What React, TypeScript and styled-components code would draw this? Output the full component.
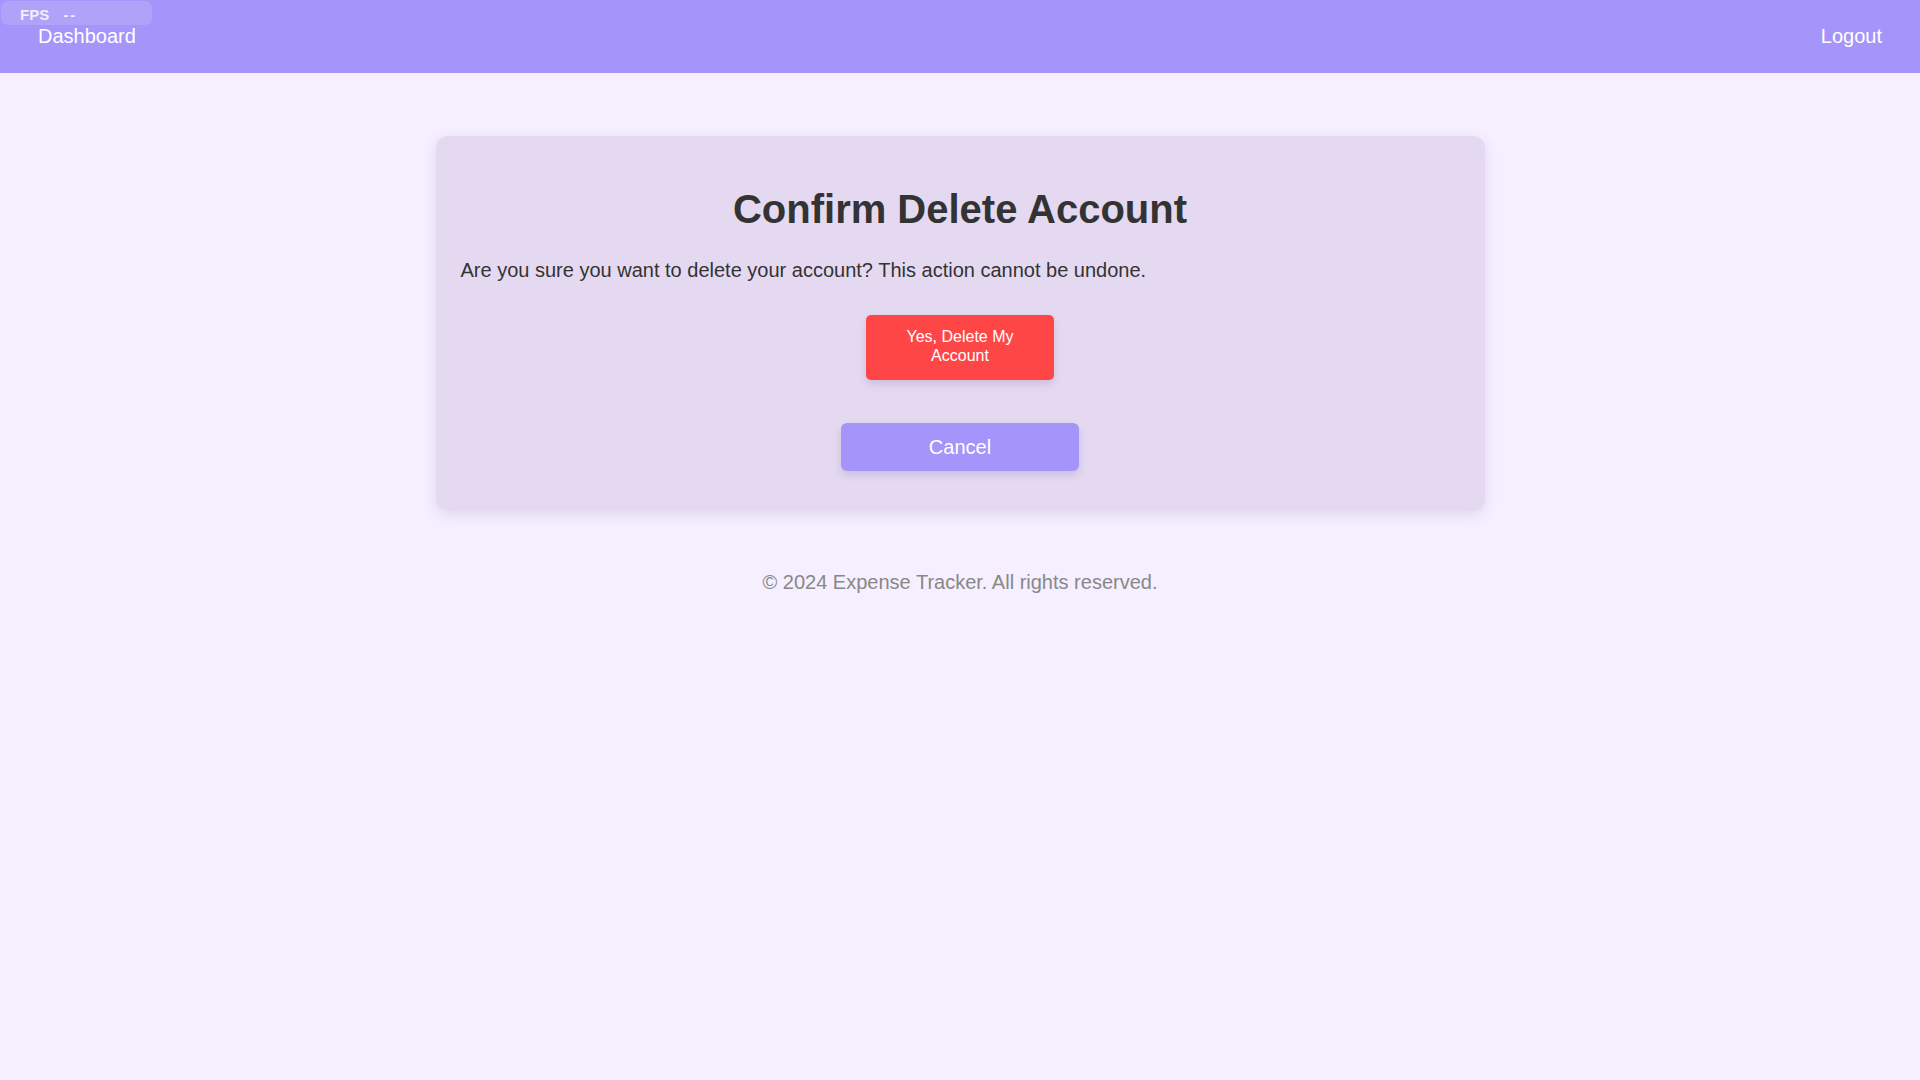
import React from "react";
import styled, { createGlobalStyle } from "styled-components";

const GlobalStyle = createGlobalStyle`
  html, body {
    margin: 0;
    padding: 0;
    background: #f5efff;
    font-family: "Liberation Sans", Arial, sans-serif;
    color: #333;
  }
  * { box-sizing: border-box; }
`;

const Page = styled.div`
  min-height: 1080px;
  background: #f5efff;
  display: flex;
  flex-direction: column;
  position: relative;
`;

const FpsBadge = styled.div`
  position: absolute;
  top: 1px;
  left: 1px;
  width: 151px;
  height: 24px;
  border-radius: 7px;
  background: rgba(255, 255, 255, 0.13);
  display: flex;
  align-items: center;
  gap: 14px;
  padding: 3px 0 0 19px;
  font-family: "Liberation Sans", Arial, sans-serif;
  color: #f1eeff;
  z-index: 10;
`;

const FpsLabel = styled.span`
  font-weight: 700;
  font-size: 15px;
  line-height: 18px;
`;

const FpsValue = styled.span`
  font-size: 15px;
  line-height: 18px;
  font-weight: 700;
  letter-spacing: 2px;
`;

const Header = styled.header`
  height: 73px;
  background: #a594f9;
  display: flex;
  align-items: center;
  justify-content: space-between;
  padding: 0 38px;
`;

const NavLink = styled.a`
  color: #ffffff;
  font-size: 20px;
  line-height: 23px;
  text-decoration: none;
  cursor: pointer;
`;

const Main = styled.main`
  display: flex;
  flex-direction: column;
  align-items: center;
  padding-top: 63px;
`;

const Card = styled.section`
  width: 1049px;
  background: #e5d9f2;
  border-radius: 12px;
  box-shadow: 0 4px 14px rgba(80, 60, 120, 0.12);
  padding: 23px 25px 40px;
  display: flex;
  flex-direction: column;
  align-items: center;
`;

const Title = styled.h1`
  margin: 27px 0 27px;
  font-size: 40px;
  line-height: 46px;
  font-weight: 700;
  color: #333;
  text-align: center;
`;

const Message = styled.p`
  align-self: stretch;
  margin: 0 0 33px;
  font-size: 20px;
  line-height: 23px;
  color: #333;
`;

const Button = styled.button<{ $variant: "danger" | "secondary" }>`
  border: none;
  cursor: pointer;
  font-family: "Liberation Sans", Arial, sans-serif;
  color: #ffffff;
  text-align: center;
  box-shadow: 0 4px 8px rgba(60, 40, 100, 0.15);
  ${(p) =>
    p.$variant === "danger"
      ? `
    width: 188px;
    background: #ff4646;
    border-radius: 5px;
    font-size: 16px;
    line-height: 19px;
    padding: 12px 20px 15px;
    margin-bottom: 43px;
  `
      : `
    width: 238px;
    background: #a594f9;
    border-radius: 6px;
    font-size: 20px;
    line-height: 24px;
    padding: 12px 20px;
  `}
`;

const Footer = styled.footer`
  margin-top: 60px;
  text-align: center;
  font-size: 20px;
  line-height: 23px;
  color: #888888;
`;

export default function App() {
  return (
    <>
      <GlobalStyle />
      <Page>
        <FpsBadge>
          <FpsLabel>FPS</FpsLabel>
          <FpsValue>--</FpsValue>
        </FpsBadge>
        <Header>
          <NavLink>Dashboard</NavLink>
          <NavLink>Logout</NavLink>
        </Header>
        <Main>
          <Card>
            <Title>Confirm Delete Account</Title>
            <Message>
              Are you sure you want to delete your account? This action cannot be undone.
            </Message>
            <Button $variant="danger">Yes, Delete My Account</Button>
            <Button $variant="secondary">Cancel</Button>
          </Card>
          <Footer>© 2024 Expense Tracker. All rights reserved.</Footer>
        </Main>
      </Page>
    </>
  );
}
